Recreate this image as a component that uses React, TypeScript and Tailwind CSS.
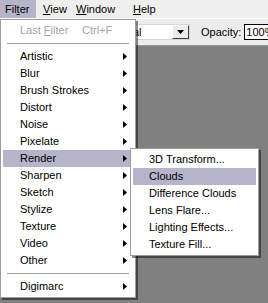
import React from 'react'

const items = ['Artistic', 'Blur', 'Brush Strokes', 'Distort', 'Noise', 'Pixelate', 'Render', 'Sharpen', 'Sketch', 'Stylize', 'Texture', 'Video', 'Other']
const renderItems = ['3D Transform...', 'Clouds', 'Difference Clouds', 'Lens Flare...', 'Lighting Effects...', 'Texture Fill...']

function Arrow() {
  return (
    <svg width="4" height="7" viewBox="0 0 4 7" className="block">
      <path d="M0 0 L4 3.5 L0 7 Z" fill="#000" />
    </svg>
  )
}

function Sep() {
  return (
    <div className="h-[9px] flex items-center px-[4px]">
      <div className="w-full h-[2px] border-t border-t-[#a0a0a0] border-b border-b-white" />
    </div>
  )
}

function Row({ label, active, arrow }: { label: string; active?: boolean; arrow?: boolean }) {
  return (
    <div className={`h-[17px] flex items-center justify-between pl-[17px] pr-[6px] ${active ? 'bg-[#b6b4c9]' : ''}`}>
      <span>{label}</span>
      {arrow && <Arrow />}
    </div>
  )
}

export default function App() {
  return (
    <div className="relative w-[268px] h-[303px] overflow-hidden bg-[#808080] font-['Liberation_Sans',Arial,sans-serif] text-[11px] text-black leading-none">
      {/* menu bar */}
      <div className="h-[19px] bg-[#efefef] flex items-stretch border-b border-b-white">
        <div className="bg-[#b6b4c9] w-[36px] flex items-center pl-[5px]">
          Fil<u>t</u>er
        </div>
        <div className="flex items-center pl-[7px] w-[40px]"><u>V</u>iew</div>
        <div className="flex items-center w-[57px]"><u>W</u>indow</div>
        <div className="flex items-center"><u>H</u>elp</div>
      </div>

      {/* options bar */}
      <div className="h-[27px] bg-[#ececec] border-b border-b-[#9a9a9a] flex items-center">
        <div className="ml-[103px] flex items-center h-[16px] border border-[#d6d6d6] bg-white">
          <div className="w-[68px] h-[14px] flex items-center pl-[2px]">Normal</div>
          <div className="w-[17px] h-[14px] bg-[#ececec] border-t border-l border-t-white border-l-white border-r border-b border-r-[#404040] border-b-[#404040] flex items-center justify-center">
            <svg width="7" height="4" viewBox="0 0 7 4"><path d="M0 0 H7 L3.5 4 Z" fill="#000" /></svg>
          </div>
        </div>
        <div className="ml-[11px]">Opacity:</div>
        <div className="ml-[3px] h-[16px] w-[40px] bg-white border border-black flex items-center pl-[1px]">100%</div>
      </div>

      {/* Filter menu */}
      <div className="absolute left-0 top-[19px] w-[136px] bg-white border border-[#9d9d9d] p-[2px] shadow-[2px_2px_0_rgba(0,0,0,0.45)]">
        <div className="h-[17px] flex items-center pl-[17px] text-[#a5a5a5]">
          <span className="w-[62px]">Last <u>F</u>ilter</span>
          <span>Ctrl+F</span>
        </div>
        <Sep />
        {items.map(it => (
          <Row key={it} label={it} arrow active={it === 'Render'} />
        ))}
        <Sep />
        <Row label="Digimarc" arrow />
      </div>

      {/* Render submenu */}
      <div className="absolute left-[130px] top-[148px] w-[129px] bg-white border border-[#9d9d9d] p-[2px] shadow-[2px_2px_0_rgba(0,0,0,0.45)]">
        {renderItems.map(it => (
          <div key={it} className={`h-[17px] flex items-center pl-[16px] ${it === 'Clouds' ? 'bg-[#b6b4c9]' : ''}`}>
            {it}
          </div>
        ))}
      </div>
    </div>
  )
}
